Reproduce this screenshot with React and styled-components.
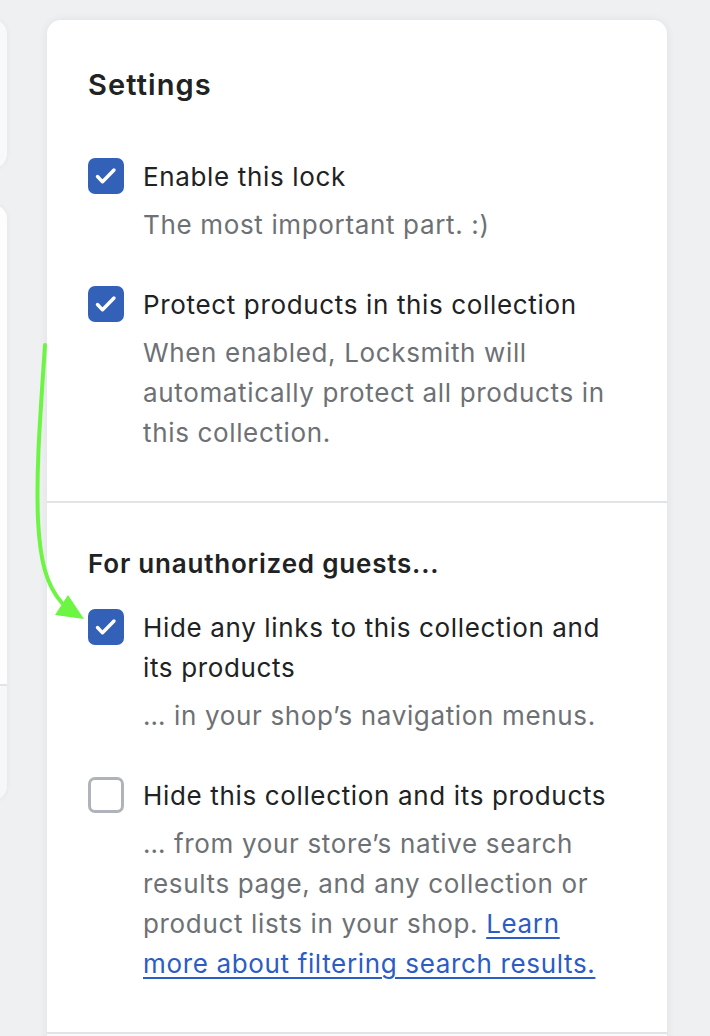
import React from 'react';
import styled, { createGlobalStyle } from 'styled-components';

const GlobalStyle = createGlobalStyle`
  html, body {
    margin: 0;
    padding: 0;
    background: #eff0f2;
    overflow: hidden;
  }
  body {
    font-family: Inter, "Noto Sans", "Liberation Sans", sans-serif;
    -webkit-font-smoothing: antialiased;
  }
`;

const settings = [
  {
    checked: true,
    label: 'Enable this lock',
    desc: 'The most important part. :)',
  },
  {
    checked: true,
    label: 'Protect products in this collection',
    desc: 'When enabled, Locksmith will automatically protect all products in this collection.',
  },
];

const guests = [
  {
    checked: true,
    label: 'Hide any links to this collection and its products',
    desc: '… in your shop’s navigation menus.',
  },
  {
    checked: false,
    label: 'Hide this collection and its products',
    desc: '… from your store’s native search results page, and any collection or product lists in your shop.',
    link: 'Learn more about filtering search results.',
  },
];

const CheckIcon = () => (
  <svg width="36" height="36" viewBox="0 0 36 36" fill="none">
    <path
      d="M9.5 18.5 L14.5 23.8 L26 12"
      stroke="#fff"
      strokeWidth="3.4"
      strokeLinecap="round"
      strokeLinejoin="round"
    />
  </svg>
);

const Arrow = () => (
  <ArrowLayer width="710" height="1036" viewBox="0 0 710 1036">
    <path
      d="M45 345 C 40 420, 36 470, 38 520 C 40 560, 46 585, 62 603"
      stroke="#6cf542"
      strokeWidth="4"
      fill="none"
      strokeLinecap="round"
    />
    <polygon points="68,595 55,615 84,619" fill="#6cf542" />
  </ArrowLayer>
);

const Option = ({ item }) => (
  <OptionRow>
    <Box checked={item.checked}>{item.checked && <CheckIcon />}</Box>
    <OptionText>
      <Label>{item.label}</Label>
      <Desc>
        {item.desc}
        {item.link && (
          <>
            {' '}
            <Link href="#">{item.link}</Link>
          </>
        )}
      </Desc>
    </OptionText>
  </OptionRow>
);

const App = () => (
  <>
    <GlobalStyle />
    <Page>
      <SideColumn>
        <SideCard />
        <SideCardTall>
          <SideCardBody />
          <SideCardFooter />
        </SideCardTall>
      </SideColumn>
      <Card>
        <Section first>
          <Title>Settings</Title>
          <OptionList>
            {settings.map((item) => (
              <Option key={item.label} item={item} />
            ))}
          </OptionList>
        </Section>
        <Section>
          <SubTitle>For unauthorized guests...</SubTitle>
          <OptionList>
            {guests.map((item) => (
              <Option key={item.label} item={item} />
            ))}
          </OptionList>
        </Section>
        <CardFooter />
      </Card>
    </Page>
    <Arrow />
  </>
);

export default App;

const Page = styled.div`
  display: flex;
  align-items: flex-start;
  gap: 40px;
  padding-top: 20px;
  margin-left: -193px;
  height: 1036px;
  box-sizing: border-box;
`;

const SideColumn = styled.div`
  flex: 0 0 200px;
  display: flex;
  flex-direction: column;
  gap: 37px;
`;

const SideCard = styled.div`
  height: 148px;
  background: #f8f9fa;
  border-radius: 14px;
  box-shadow: 0 0 6px rgba(0, 0, 0, 0.05);
`;

const SideCardTall = styled.div`
  display: flex;
  flex-direction: column;
  height: 595px;
  border-radius: 14px;
  overflow: hidden;
  box-shadow: 0 0 6px rgba(0, 0, 0, 0.05);
`;

const SideCardBody = styled.div`
  height: 479px;
  background: #fdfdfd;
  border-bottom: 2px solid #e1e3e6;
`;

const SideCardFooter = styled.div`
  flex: 1;
  background: #f6f7f9;
`;

const Card = styled.div`
  flex: 0 0 620px;
  background: #fff;
  border-radius: 14px;
  box-shadow: 0 0 10px rgba(0, 0, 0, 0.07);
  overflow: hidden;
`;

const Section = styled.div`
  padding: ${(p) => (p.first ? '45px' : '41px')} 54px 48px 41px;
  border-bottom: 2px solid #e1e3e6;
`;

const Title = styled.h2`
  margin: 0 0 52px;
  font-size: 29px;
  line-height: 40px;
  font-weight: 600;
  letter-spacing: 1.1px;
  color: #202223;
`;

const SubTitle = styled.h3`
  margin: 0 0 24px;
  font-size: 26px;
  line-height: 40px;
  font-weight: 600;
  letter-spacing: 0.8px;
  color: #202223;
`;

const OptionList = styled.div`
  display: flex;
  flex-direction: column;
  gap: 40px;
`;

const OptionRow = styled.div`
  display: flex;
  align-items: flex-start;
  gap: 19px;
`;

const Box = styled.div`
  flex: 0 0 36px;
  width: 36px;
  height: 36px;
  margin-top: 1px;
  box-sizing: border-box;
  border-radius: 7px;
  background: ${(p) => (p.checked ? '#3361b8' : '#fff')};
  border: ${(p) => (p.checked ? 'none' : '3px solid #aeb4b9')};
  display: flex;
  align-items: center;
  justify-content: center;
`;

const OptionText = styled.div`
  display: flex;
  flex-direction: column;
  gap: 8px;
  min-width: 0;
`;

const Label = styled.div`
  font-size: 26px;
  line-height: 40px;
  letter-spacing: 0.65px;
  color: #202223;
`;

const Desc = styled.div`
  font-size: 26px;
  line-height: 40px;
  letter-spacing: 0.65px;
  color: #6d7175;
`;

const Link = styled.a`
  color: #2c5cc5;
  text-decoration: underline;
  text-underline-offset: 4px;
  text-decoration-thickness: 2px;
`;

const CardFooter = styled.div`
  height: 80px;
  background: #f9fafb;
`;

const ArrowLayer = styled.svg`
  position: absolute;
  left: 0;
  top: 0;
  pointer-events: none;
`;
